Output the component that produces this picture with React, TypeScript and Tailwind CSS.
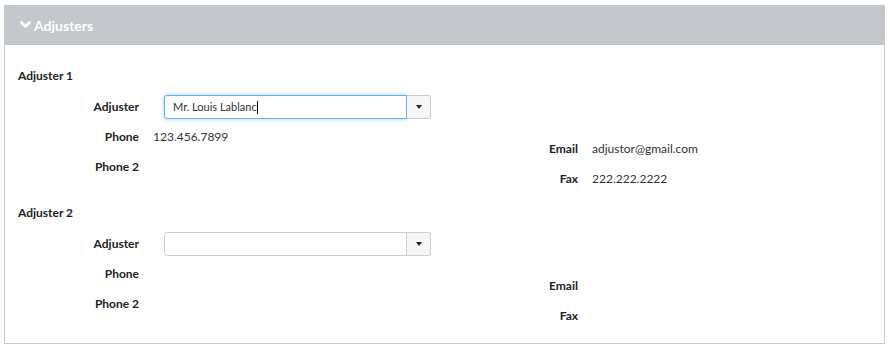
type Adjuster = {
  title: string;
  name: string;
  phone: string;
  phone2: string;
  email: string;
  fax: string;
  focused: boolean;
};

const adjusters: Adjuster[] = [
  {
    title: 'Adjuster 1',
    name: 'Mr. Louis Lablanc',
    phone: '123.456.7899',
    phone2: '',
    email: 'adjustor@gmail.com',
    fax: '222.222.2222',
    focused: true,
  },
  {
    title: 'Adjuster 2',
    name: '',
    phone: '',
    phone2: '',
    email: '',
    fax: '',
    focused: false,
  },
];

function Row({ label, value }: { label: string; value: string }) {
  return (
    <div className="flex items-center h-[30px]">
      <div className="w-[121px] text-right font-bold text-[12px] text-[#222]">{label}</div>
      <div className="ml-[14px] text-[12px] text-[#333]">{value}</div>
    </div>
  );
}

function AdjusterSelect({ value, focused }: { value: string; focused: boolean }) {
  return (
    <div className="ml-[25px] flex h-[24px]">
      <div
        className={
          focused
            ? 'w-[243px] h-full flex items-center px-[8px] bg-white border border-[#66afe9] rounded-l-[3px] shadow-[0_0_4px_rgba(102,175,233,0.6)] text-[11px] text-[#333]'
            : 'w-[243px] h-full flex items-center px-[8px] bg-white border border-[#ccc] rounded-l-[3px] text-[11px] text-[#333]'
        }
      >
        {value}
        {focused && <span className="w-px h-[13px] bg-black" />}
      </div>
      <button className="w-[24px] h-full flex items-center justify-center bg-[#f6f6f6] border border-l-0 border-[#ccc] rounded-r-[3px]">
        <span className="w-0 h-0 border-l-[3px] border-r-[3px] border-t-[4px] border-l-transparent border-r-transparent border-t-[#222]" />
      </button>
    </div>
  );
}

function AdjusterSection({ a, first }: { a: Adjuster; first: boolean }) {
  return (
    <div className={first ? '' : 'mt-[9px]'}>
      <div className="h-[20px] flex items-center font-bold text-[12px] text-[#222]">{a.title}</div>
      <div className="mt-[6px] flex">
        {/* left column */}
        <div className="w-[439px]">
          <div className="flex items-center h-[30px]">
            <div className="w-[121px] text-right font-bold text-[12px] text-[#222]">Adjuster</div>
            <AdjusterSelect value={a.name} focused={a.focused} />
          </div>
          <Row label="Phone" value={a.phone} />
          <Row label="Phone 2" value={a.phone2} />
        </div>
        {/* right column */}
        <div className="pt-[42px]">
          <Row label="Email" value={a.email} />
          <Row label="Fax" value={a.fax} />
        </div>
      </div>
    </div>
  );
}

export default function App() {
  return (
    <div className="w-[890px] h-[350px] bg-white pt-[5px] pl-[4px]" style={{ fontFamily: 'Lato, "Open Sans", sans-serif' }}>
      <div className="w-[881px] border border-t-0 border-[#c9cbce]">
        <div className="h-[40px] bg-[#c4c7cb] flex items-center px-[15px] text-white font-bold text-[14px]">
          <svg width="11" height="8" viewBox="0 0 11 8" className="mr-[3px]">
            <polyline points="1.5,1.5 5.5,5.5 9.5,1.5" fill="none" stroke="white" strokeWidth="2.8" strokeLinecap="round" strokeLinejoin="round" />
          </svg>
          Adjusters
        </div>
        <div className="pt-[21px] pb-[12px] pl-[13px]">
          {adjusters.map((a, i) => (
            <AdjusterSection key={a.title} a={a} first={i === 0} />
          ))}
        </div>
      </div>
    </div>
  );
}
